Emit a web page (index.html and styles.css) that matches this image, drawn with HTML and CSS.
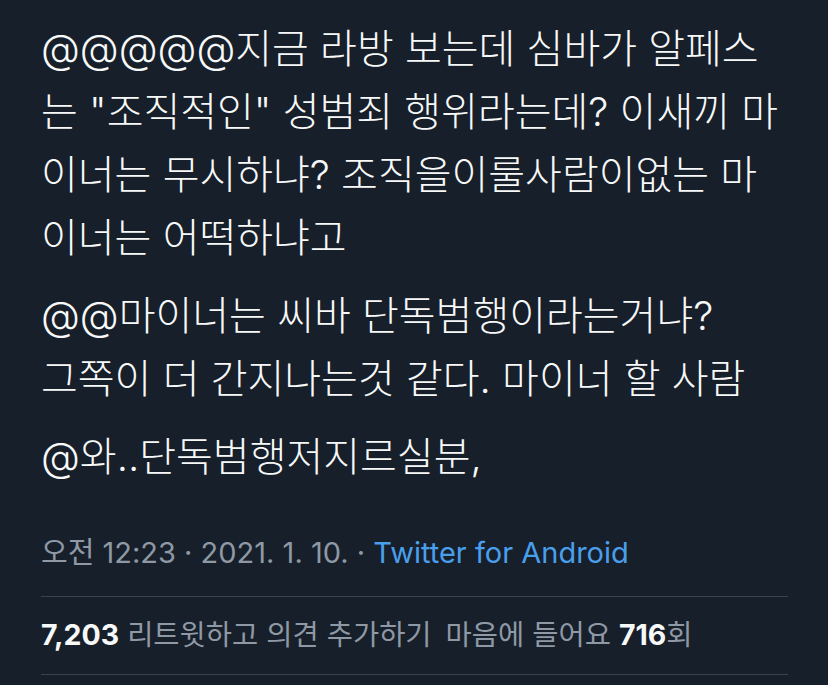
FILE: index.html
```html
<!DOCTYPE html>
<html lang="ko">
<head>
<meta charset="utf-8">
<link rel="stylesheet" href="styles.css">
</head>
<body>
<article class="tweet">
  <div class="body">
    <p class="para">@@@@@지금 라방 보는데 심바가 알페스<br>는 "조직적인" 성범죄 행위라는데? 이새끼 마<br>이너는 무시하냐? 조직을이룰사람이없는 마<br>이너는 어떡하냐고</p>
    <p class="para">@@마이너는 씨바 단독범행이라는거냐?<br>그쪽이 더 간지나는것 같다. 마이너 할 사람</p>
    <p class="para">@와..단독범행저지르실분,</p>
  </div>
  <div class="meta">오전 12:23 · 2021. 1. 10. · <span class="source">Twitter for Android</span></div>
  <div class="stats">
    <span><b>7,203</b> 리트윗하고 의견 추가하기</span>
    <span>마음에 들어요 <b>716</b>회</span>
  </div>
</article>
</body>
</html>
```
FILE: styles.css
```css
html, body {
  margin: 0;
  padding: 0;
  background: #171f2a;
}
body {
  width: 828px;
  height: 685px;
  overflow: hidden;
  font-family: Inter, "Noto Sans CJK KR", sans-serif;
}
.tweet {
  margin-left: 41px;
  width: 747px;
  padding-top: 17px;
}
.body {
  color: #f7f9f9;
  font-size: 40px;
  font-weight: 300;
  line-height: 63px;
}
.para {
  margin: 0 0 15px 0;
}
.para:last-child {
  margin-bottom: 0;
}
.meta {
  color: #8e99a5;
  font-size: 29px;
  line-height: 40px;
  padding-top: 45px;
  padding-bottom: 23px;
  border-bottom: 1px solid #38444d;
}
.source {
  color: #4a9fec;
}
.stats {
  color: #8e99a5;
  font-size: 28.5px;
  line-height: 40px;
  padding: 18px 0 19px;
  border-bottom: 1px solid #38444d;
  display: flex;
  gap: 14px;
}
.stats b {
  color: #f7f9f9;
  font-weight: 700;
}
```
